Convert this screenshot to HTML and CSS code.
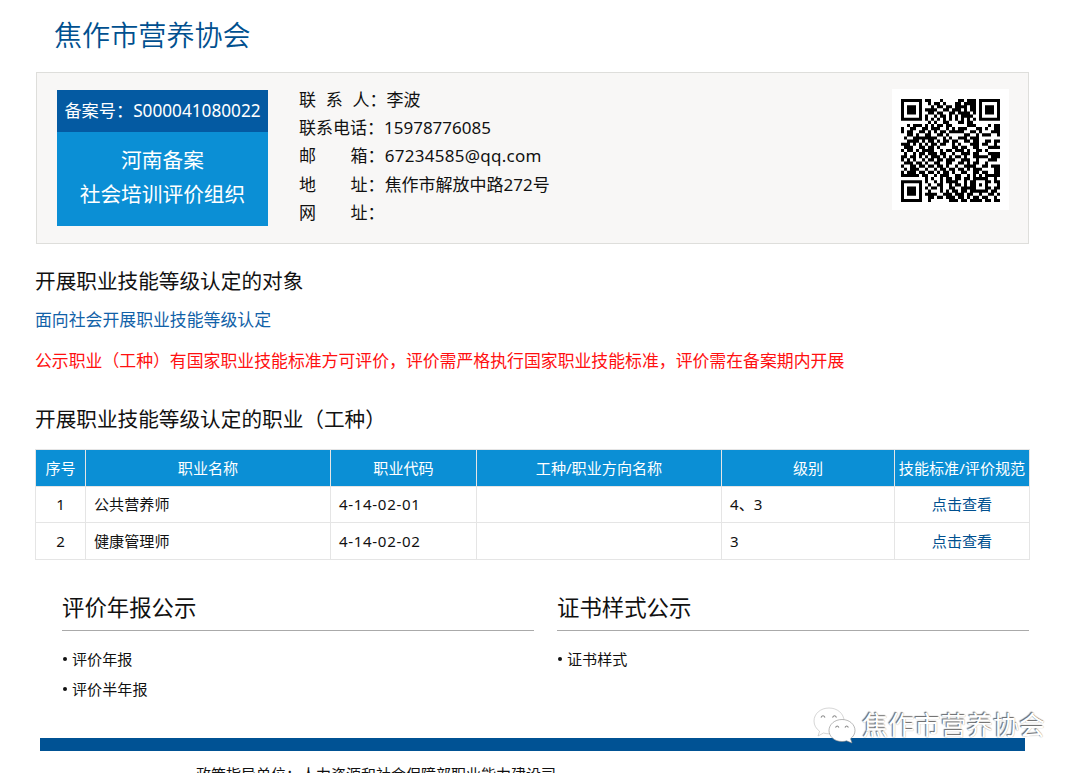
FILE: index.html
```html
<!DOCTYPE html>
<html lang="zh-CN">

    <head>
        <meta charset="UTF-8">
        <meta name="viewport" content="width=device-width, initial-scale=1.0">
        <title>焦作市营养协会</title>
        <link rel="stylesheet" href="styles.css">
    </head>

    <body>
        <div class="page">
            <h1 class="title">焦作市营养协会</h1>

            <div class="info">
                <div class="badge">
                    <div class="badge__no">备案号：S000041080022</div>
                    <div class="badge__name">河南备案<br>社会培训评价组织</div>
                </div>
                <ul class="contact">
                    <li><span class="label label--three">联 系 人：</span>李波</li>
                    <li><span class="label">联系电话：</span>15978776085</li>
                    <li><span class="label label--two">邮 箱：</span><span class="mail">67234585@qq.com</span></li>
                    <li><span class="label label--two">地 址：</span>焦作市解放中路272号</li>
                    <li><span class="label label--two">网 址：</span></li>
                </ul>
                <div class="qr">
                    <svg viewBox="0 0 33 33" preserveAspectRatio="none" data-qr></svg>
                </div>
            </div>

            <h2 class="heading">开展职业技能等级认定的对象</h2>
            <p class="scope">面向社会开展职业技能等级认定</p>
            <p class="notice">公示职业（工种）有国家职业技能标准方可评价，评价需严格执行国家职业技能标准，评价需在备案期内开展</p>

            <h2 class="heading heading--jobs">开展职业技能等级认定的职业（工种）</h2>
            <table class="jobs">
                <colgroup>
                    <col class="col-no">
                    <col class="col-name">
                    <col class="col-code">
                    <col class="col-type">
                    <col class="col-level">
                    <col class="col-link">
                </colgroup>
                <thead>
                    <tr>
                        <th>序号</th>
                        <th>职业名称</th>
                        <th>职业代码</th>
                        <th>工种/职业方向名称</th>
                        <th>级别</th>
                        <th>技能标准/评价规范</th>
                    </tr>
                </thead>
                <tbody>
                    <tr>
                        <td class="center">1</td>
                        <td>公共营养师</td>
                        <td class="code">4-14-02-01</td>
                        <td></td>
                        <td>4、3</td>
                        <td class="center"><a href="#">点击查看</a></td>
                    </tr>
                    <tr>
                        <td class="center">2</td>
                        <td>健康管理师</td>
                        <td class="code">4-14-02-02</td>
                        <td></td>
                        <td>3</td>
                        <td class="center"><a href="#">点击查看</a></td>
                    </tr>
                </tbody>
            </table>

            <div class="public">
                <div class="public__col">
                    <h3>评价年报公示</h3>
                    <ul>
                        <li>评价年报</li>
                        <li>评价半年报</li>
                    </ul>
                </div>
                <div class="public__col">
                    <h3>证书样式公示</h3>
                    <ul>
                        <li>证书样式</li>
                    </ul>
                </div>
            </div>

            <div class="footer">
                <div class="footer__bar"></div>
                <p>政策指导单位：人力资源和社会保障部职业能力建设司</p>
            </div>
        </div>

        <div class="watermark">
            <svg class="watermark__icon" viewBox="0 0 44 37">
                <path class="bubble" d="M16 1C7.500 1 1 6.800 1 14c0 4.300 2.200 7.800 5.600 10.200L5 29l5.500-3c1.700.5 3.500.8 5.500.8 8.500 0 15-5.600 15-12.800S24.500 1 16 1z" />
                <path class="eye" d="M8 10.500q2-3.500 4 0M19.500 10.500q2-3.500 4 0" />
                <path class="bubble bubble--front" d="M29 12.500c-7.300 0-13 4.900-13 11s5.700 11 13 11c1.700 0 3.200-.2 4.600-.7L39 36l-1.500-4.300c2.800-2 4.500-4.900 4.500-8.200 0-6.100-5.700-11-13-11z" />
                <path class="eye" d="M22.500 20.500q1.700-3 3.400 0M32 20.500q1.700-3 3.400 0" />
            </svg>
            <span>焦作市营养协会</span>
        </div>

        <script>
            const rows = [
                "111111101100010000011011101111111",
                "100000100101101000110111101000001",
                "101110100010110110111101101011101",
                "101110101111001101110101101011101",
                "101110100110110011011110101011101",
                "100000101001011010101111001000001",
                "111111101010101010101010101111111",
                "000000000101001100011011000000000",
                "001011101010110110000011100001011",
                "100110011011100101011100011010011",
                "101100110101011011111001101000111",
                "001101001100110100000110010111001",
                "010011111111001010011101110000000",
                "001111010110101101100110110011011",
                "111010101011011001010001110110010",
                "011100110110100001101100110001111",
                "101101011110010110111010011010000",
                "010010110111011001001110110001111",
                "110110101011101010110100111110111",
                "101010010110110111001110010001110",
                "011101101001100110011010110010000",
                "100110110110110100100111100110111",
                "010111001001011011011010111000011",
                "101110110110101101001100110110011",
                "111111011001011100110010101011111",
                "000000001010010110110110111110010",
                "111111101001010111100101100011011",
                "100000100100110010110101101010001",
                "101110101011010011001111100011011",
                "101110100100010101101101111110110",
                "101110101111001110111011001001101",
                "100000100110110111011010110110010",
                "111111100100000011101101111011011"
            ];

            const qr = document.querySelector("[data-qr]");
            const path = document.createElementNS("http://www.w3.org/2000/svg", "path");
            let d = "";
            rows.forEach((row, y) => {
                for (const run of row.matchAll(/1+/g)) {
                    d += `M${run.index} ${y}h${run[0].length}v1h-${run[0].length}z`;
                }
            });
            path.setAttribute("d", d);
            qr.appendChild(path);
        </script>
    </body>

</html>
```
FILE: styles.css
```css
* {
    margin: 0;
    padding: 0;
    box-sizing: border-box;
}

body {
    position: relative;
    height: 773px;
    overflow: hidden;
    background: #fff;
    color: #111;
    font-family: "Noto Sans", "Noto Sans CJK SC", sans-serif;
    font-size: 15.1px;
}

ul {
    list-style: none;
}

h1,
h2,
h3,
th {
    font-weight: 400;
}

.page {
    width: 994px;
    margin-left: 35px;
}

.title {
    height: 72px;
    padding-left: 19px;
    font-size: 28.1px;
    font-weight: 350;
    line-height: 71px;
    color: #00508f;
}

.info {
    display: flex;
    height: 172px;
    margin-left: 1px;
    padding: 17px 19px 0 20px;
    background: #f8f7f6;
    border: 1px solid #dededb;
}

.badge {
    width: 211px;
    height: 136px;
    background: #0b8fd5;
    color: #fff;
    text-align: center;
    white-space: nowrap;
}

.badge__no {
    height: 42px;
    background: #045aa2;
    font-size: 17.2px;
    line-height: 42px;
}

.badge__name {
    padding-top: 11px;
    font-size: 20.7px;
    line-height: 34px;
}

.contact {
    margin: -4px 0 0 31px;
    font-size: 17px;
    line-height: 28.2px;
    white-space: nowrap;
}

.label--three {
    word-spacing: 5.3px;
}

.label--two {
    word-spacing: 30.2px;
}

.mail {
    letter-spacing: 0.28px;
}

.qr {
    width: 117px;
    height: 121px;
    margin: -1px 0 0 auto;
    padding: 10px 9px 8px;
    background: #fff;
}

.qr svg {
    display: block;
    width: 99px;
    height: 103px;
}

.heading {
    margin-top: 22px;
    font-size: 20.65px;
    line-height: 30px;
}

.scope {
    margin-top: 12px;
    font-size: 16.88px;
    line-height: 24px;
    color: #1262a8;
}

.notice {
    margin-top: 17px;
    font-size: 16.88px;
    line-height: 24px;
    color: #ff1010;
    white-space: nowrap;
}

.heading--jobs {
    margin-top: 31px;
}

.jobs {
    width: 994px;
    margin-top: 15px;
    border-collapse: collapse;
    table-layout: fixed;
    line-height: 20px;
}

.col-no {
    width: 50px;
}

.col-name {
    width: 245px;
}

.col-code {
    width: 146px;
}

.col-type {
    width: 245px;
}

.col-level {
    width: 173px;
}

.col-link {
    width: 135px;
}

.jobs th,
.jobs td {
    height: 36.5px;
    border: 1px solid #e5e5e5;
}

.jobs th {
    background: #0b8fd5;
    color: #fff;
    white-space: nowrap;
}

.jobs td {
    padding-left: 8px;
}

.jobs .center {
    padding-left: 0;
    text-align: center;
}

.jobs .code {
    letter-spacing: 0.65px;
}

.jobs a {
    color: #00508f;
    text-decoration: none;
}

.public {
    display: flex;
    gap: 23px;
    height: 178px;
    padding: 31px 0 0 27px;
}

.public__col {
    width: 472px;
}

.public h3 {
    height: 40px;
    border-bottom: 1px solid #aaa;
    font-size: 22.4px;
    line-height: 34px;
}

.public ul {
    padding-top: 13px;
}

.public li {
    display: flex;
    align-items: center;
    gap: 5px;
    line-height: 30px;
}

.public li::before {
    content: "";
    width: 4px;
    height: 4px;
    margin-left: 1px;
    border-radius: 50%;
    background: #111;
}

.footer {
    padding-left: 5px;
}

.footer__bar {
    width: 985px;
    height: 13px;
    background: #005294;
}

.footer p {
    padding: 12px 0 0 156px;
    font-size: 15px;
    line-height: 22px;
}

/* account mark lying over the bottom bar */
.watermark {
    position: absolute;
    left: 813px;
    top: 705px;
    display: flex;
    align-items: center;
    gap: 5px;
    height: 41px;
    color: #fff;
    font-size: 26.2px;
    line-height: 41px;
    white-space: nowrap;
    text-shadow: -1px -1px 1px #666, 0 0 1px #999;
}

.watermark__icon {
    width: 44px;
    height: 37px;
}

.bubble {
    fill: #fff;
    stroke: #bbb;
    stroke-width: 0.6;
}

.bubble--front {
    stroke: #888;
}

.eye {
    fill: none;
    stroke: #888;
    stroke-width: 1.2;
}
```
